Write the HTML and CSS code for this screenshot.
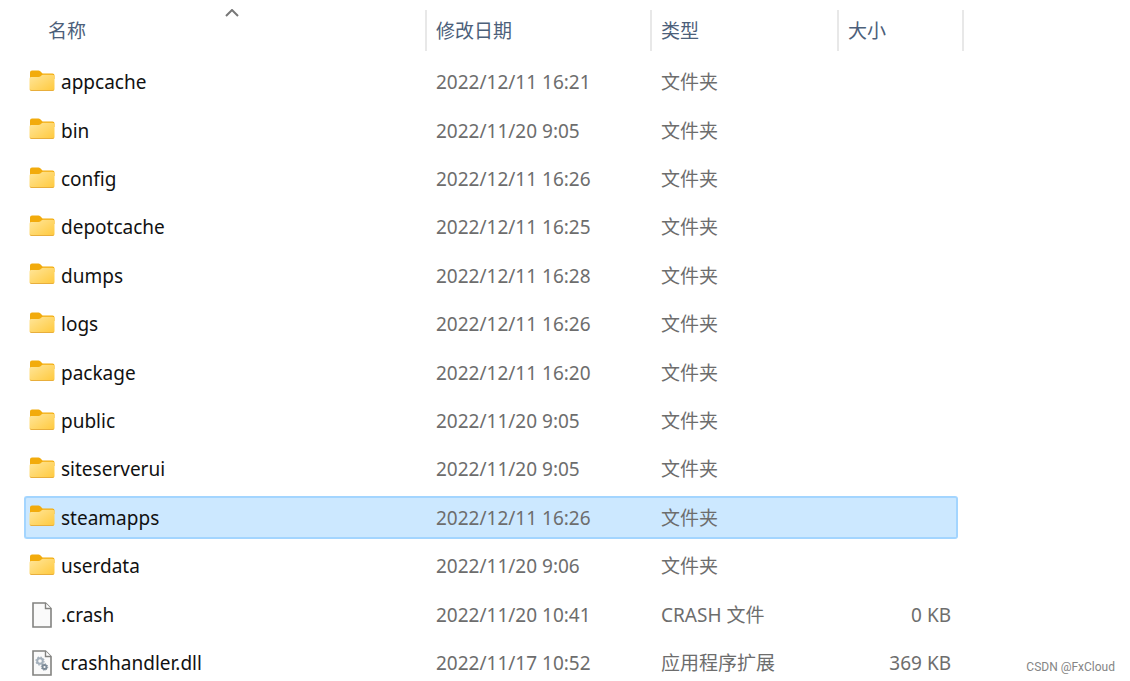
FILE: index.html
```html
<!DOCTYPE html>
<html lang="zh-CN">
<head>
<meta charset="utf-8">
<title>Steam</title>
<link rel="stylesheet" href="styles.css">
</head>
<body>
<svg class="defs" aria-hidden="true">
  <defs>
    <linearGradient id="folder-face" x1="0" y1="0" x2="1" y2="1">
      <stop offset="0" stop-color="#ffe69b"/>
      <stop offset="1" stop-color="#ffc93c"/>
    </linearGradient>
    <symbol id="folder" viewBox="0 0 26 22">
      <path d="M1 9V2.500Q1 .5 3 .5H9.500Q10.500 .5 11.300 1.300L13.500 3.500H23.500Q25.500 3.500 25.500 5.500V9Z" fill="#f2ab0c"/>
      <path d="M.5 8.500Q.5 7 2 7H9.500Q10.800 7 11.600 6.200L12.400 5.400Q13 4.800 14 4.800H23.500Q25.500 4.800 25.500 6.800V19Q25.500 21 23.500 21H2.500Q.5 21 .5 19Z" fill="url(#folder-face)"/>
      <path d="M.7 19.200Q1 21 2.500 21H23.500Q25 21 25.300 19.200Q24.800 20 23.500 20H2.500Q1.200 20 .7 19.200Z" fill="#e8ae3c"/>
    </symbol>
    <symbol id="file" viewBox="0 0 20 26">
      <path d="M1 1H13.500L19 6.500V25H1Z" fill="#fafafa" stroke="#838380" stroke-width="1.600"/>
      <path d="M13.500 1V6.500H19" fill="#fff" stroke="#838380" stroke-width="1.400"/>
    </symbol>
    <symbol id="library" viewBox="0 0 20 26">
      <use href="#file"/>
      <circle cx="8" cy="11" r="2.800" fill="none" stroke="#a3afba" stroke-width="2"/>
      <circle cx="8" cy="11" r="4" fill="none" stroke="#a3afba" stroke-width="1.200" stroke-dasharray="1.600 1.540"/>
      <circle cx="12.500" cy="17" r="2" fill="none" stroke="#7d8b98" stroke-width="1.800"/>
      <circle cx="12.500" cy="17" r="3.200" fill="none" stroke="#7d8b98" stroke-width="1" stroke-dasharray="1.300 1.200"/>
    </symbol>
  </defs>
</svg>
<main class="pane">
  <table class="files">
    <colgroup>
      <col class="col-name"><col class="col-date"><col class="col-type"><col class="col-size">
    </colgroup>
    <thead>
      <tr>
        <th class="first" aria-sort="ascending"><button type="button">名称</button><svg class="sort" viewBox="0 0 14 8" aria-hidden="true"><path d="M1 7L7 1L13 7"/></svg></th>
        <th><button type="button">修改日期</button></th>
        <th><button type="button">类型</button></th>
        <th class="last"><button type="button">大小</button></th>
      </tr>
    </thead>
    <tbody>
      <tr><td class="name"><div class="entry"><svg class="icon folder"><use href="#folder"/></svg>appcache</div></td><td class="date">2022/12/11 16:21</td><td>文件夹</td><td class="size"></td></tr>
      <tr><td class="name"><div class="entry"><svg class="icon folder"><use href="#folder"/></svg>bin</div></td><td class="date">2022/11/20 9:05</td><td>文件夹</td><td class="size"></td></tr>
      <tr><td class="name"><div class="entry"><svg class="icon folder"><use href="#folder"/></svg>config</div></td><td class="date">2022/12/11 16:26</td><td>文件夹</td><td class="size"></td></tr>
      <tr><td class="name"><div class="entry"><svg class="icon folder"><use href="#folder"/></svg>depotcache</div></td><td class="date">2022/12/11 16:25</td><td>文件夹</td><td class="size"></td></tr>
      <tr><td class="name"><div class="entry"><svg class="icon folder"><use href="#folder"/></svg>dumps</div></td><td class="date">2022/12/11 16:28</td><td>文件夹</td><td class="size"></td></tr>
      <tr><td class="name"><div class="entry"><svg class="icon folder"><use href="#folder"/></svg>logs</div></td><td class="date">2022/12/11 16:26</td><td>文件夹</td><td class="size"></td></tr>
      <tr><td class="name"><div class="entry"><svg class="icon folder"><use href="#folder"/></svg>package</div></td><td class="date">2022/12/11 16:20</td><td>文件夹</td><td class="size"></td></tr>
      <tr><td class="name"><div class="entry"><svg class="icon folder"><use href="#folder"/></svg>public</div></td><td class="date">2022/11/20 9:05</td><td>文件夹</td><td class="size"></td></tr>
      <tr><td class="name"><div class="entry"><svg class="icon folder"><use href="#folder"/></svg>siteserverui</div></td><td class="date">2022/11/20 9:05</td><td>文件夹</td><td class="size"></td></tr>
      <tr class="selected"><td class="name"><div class="entry"><svg class="icon folder"><use href="#folder"/></svg>steamapps</div></td><td class="date">2022/12/11 16:26</td><td>文件夹</td><td class="size"></td></tr>
      <tr><td class="name"><div class="entry"><svg class="icon folder"><use href="#folder"/></svg>userdata</div></td><td class="date">2022/11/20 9:06</td><td>文件夹</td><td class="size"></td></tr>
      <tr><td class="name"><div class="entry"><svg class="icon file"><use href="#file"/></svg>.crash</div></td><td class="date">2022/11/20 10:41</td><td>CRASH 文件</td><td class="size">0 KB</td></tr>
      <tr><td class="name"><div class="entry"><svg class="icon file"><use href="#library"/></svg>crashhandler.dll</div></td><td class="date">2022/11/17 10:52</td><td>应用程序扩展</td><td class="size">369 KB</td></tr>
    </tbody>
  </table>
  <div class="watermark">CSDN @FxCloud</div>
</main>
</body>
</html>
```

FILE: styles.css
```css
* {
  box-sizing: border-box;
}

body {
  margin: 0;
  background: #fff;
  color: #6d6d6d;
  font: 19px/24px "Noto Sans", "Noto Sans CJK SC", sans-serif;
}

.defs {
  position: absolute;
  width: 0;
  height: 0;
}

.pane {
  position: relative;
  height: 100vh;
  padding-left: 24px;
  overflow: hidden;
}

.files {
  width: 934px;
  table-layout: fixed;
  border-collapse: separate;
  border-spacing: 0 6px;
}

.col-name { width: 402px; }
.col-date { width: 225px; }
.col-type { width: 187px; }

/* Column headings */
th {
  position: relative;
  height: 49px;
  padding: 0 0 0 10px;
  font-weight: 400;
  text-align: left;
}

th.first {
  padding-left: 24px;
}

th + th::before,
th.last::after {
  content: "";
  position: absolute;
  top: 4px;
  bottom: 4px;
  left: -1px;
  width: 2px;
  background: #e8e8e8;
}

th.last::after {
  left: auto;
  right: -6px;
}

th button {
  padding: 0;
  border: 0;
  background: none;
  color: #4c607a;
  font: inherit;
}

.sort {
  position: absolute;
  top: 3px;
  left: 50%;
  width: 14px;
  height: 8px;
  fill: none;
  stroke: #777;
  stroke-width: 2;
}

/* Rows */
td {
  height: 42px;
  padding: 0 0 0 10px;
  border: 0 solid transparent;
  border-width: 2px 0;
  white-space: nowrap;
}

tr:nth-child(5n) td,
tr:nth-child(5n + 2) td {
  height: 43px;
}

td.name {
  padding-left: 3px;
  border-left-width: 2px;
  color: #111;
}

td.size {
  padding-right: 5px;
  border-right-width: 2px;
  text-align: right;
}

.selected td {
  background: #cce8ff;
  border-color: #a3d5ff;
}

.selected .name {
  border-radius: 3px 0 0 3px;
}

.selected .size {
  border-radius: 0 3px 3px 0;
}

.entry {
  display: flex;
  align-items: center;
  gap: 6px;
}

.icon {
  flex: none;
}

.icon.folder {
  width: 26px;
  height: 22px;
  margin-bottom: 3px;
}

.icon.file {
  width: 20px;
  height: 26px;
  margin: 0 3px;
}

.watermark {
  position: absolute;
  right: 15px;
  bottom: 6px;
  color: #858585;
  font: 12px/16px Roboto, "Liberation Sans", sans-serif;
}
```
